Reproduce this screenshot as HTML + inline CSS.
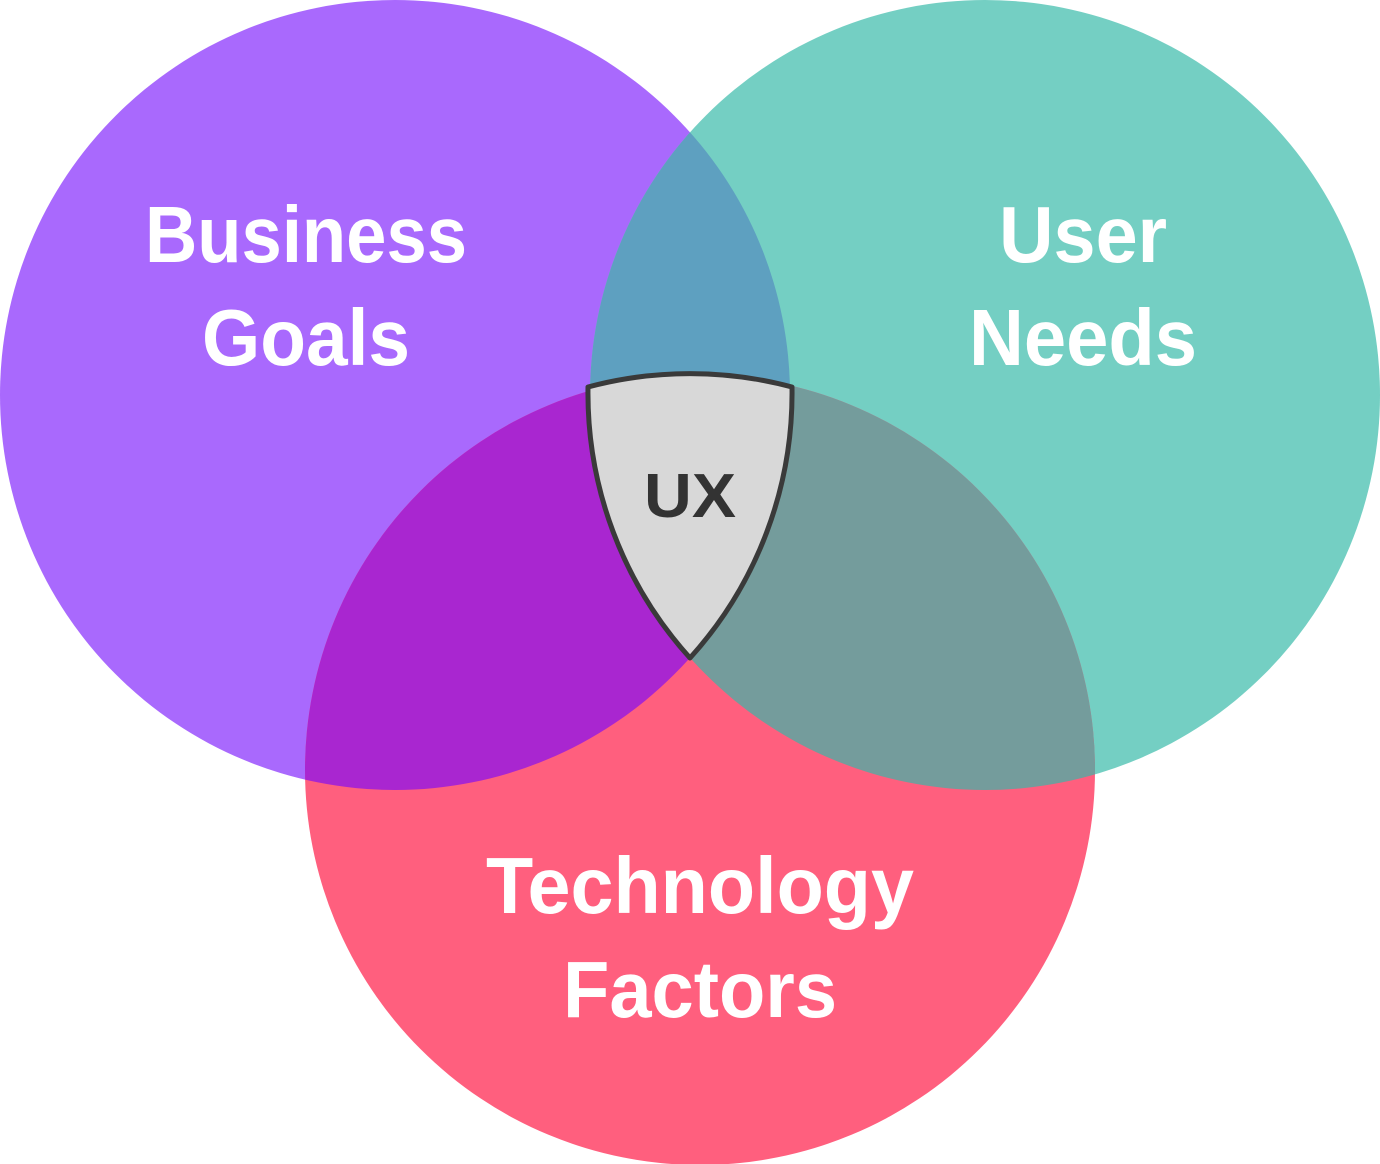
<!DOCTYPE html>
<html><head><style>html,body{margin:0;padding:0;background:#fff;}svg{display:block}</style></head>
<body>
<svg width="1380" height="1164" viewBox="0 0 1380 1164" xmlns="http://www.w3.org/2000/svg">
<defs>
<clipPath id="cp"><circle cx="395" cy="395" r="395"/></clipPath>
<clipPath id="ct"><circle cx="985" cy="395" r="395"/></clipPath>
</defs>
<circle cx="395" cy="395" r="395" fill="#a969fd"/>
<circle cx="985" cy="395" r="395" fill="#74cfc3"/>
<circle cx="700" cy="770" r="395" fill="#ff5f7e"/>
<circle cx="985" cy="395" r="395" fill="#5ea0c0" clip-path="url(#cp)"/>
<circle cx="700" cy="770" r="395" fill="#a926d0" clip-path="url(#cp)"/>
<circle cx="700" cy="770" r="395" fill="#749c9c" clip-path="url(#ct)"/>
<path d="M588 387 A395 395 0 0 1 792 387 A395 395 0 0 1 690 658 A395 395 0 0 1 588 387 Z" fill="#d8d8d8" stroke="#3a3a3a" stroke-width="5" stroke-linejoin="round"/>
<g font-family="Liberation Sans, sans-serif" font-weight="bold" font-size="80" fill="#fff" text-anchor="middle">
<text x="306" y="262" textLength="322" lengthAdjust="spacingAndGlyphs">Business</text>
<text x="306" y="365" textLength="208" lengthAdjust="spacingAndGlyphs">Goals</text>
<text x="1083" y="262" textLength="168" lengthAdjust="spacingAndGlyphs">User</text>
<text x="1083" y="365" textLength="228" lengthAdjust="spacingAndGlyphs">Needs</text>
<text x="700" y="913" textLength="428" lengthAdjust="spacingAndGlyphs">Technology</text>
<text x="700" y="1017" textLength="274" lengthAdjust="spacingAndGlyphs">Factors</text>
</g>
<text x="690" y="517" font-family="Liberation Sans, sans-serif" font-weight="bold" font-size="62" fill="#333" text-anchor="middle" textLength="92" lengthAdjust="spacingAndGlyphs">UX</text>
</svg>
</body></html>
